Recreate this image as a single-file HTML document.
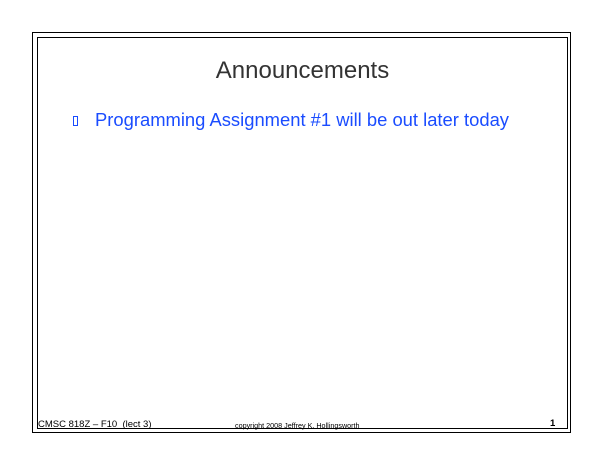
<!DOCTYPE html>
<html><head><style>
body{margin:0;width:605px;height:468px;background:#fff;position:relative;overflow:hidden;font-family:"Liberation Sans",sans-serif}
.o{position:absolute;left:32px;top:32px;width:539px;height:401px;border:1.5px solid #000;box-sizing:border-box}
.i{position:absolute;left:37px;top:37px;width:531px;height:392px;border:1.5px solid #000;box-sizing:border-box}
.t{position:absolute;left:0;width:605px;top:57px;text-align:center;font-size:24px;color:#333}
.b{position:absolute;left:73px;top:116px;width:5px;height:10px;border:1px solid #1a4cff;box-sizing:border-box}
.l{position:absolute;left:95px;top:109px;font-size:18.4px;color:#1a4cff;white-space:nowrap}
.f{position:absolute;top:419px;font-size:9.5px;color:#000;white-space:nowrap}
</style></head><body>
<div class="o"></div><div class="i"></div>
<div class="t">Announcements</div>
<div class="b"></div>
<div class="l">Programming Assignment #1 will be out later today</div>
<div class="f" style="left:38px">CMSC 818Z – F10 &nbsp;(lect 3)</div>
<div class="f" style="left:235px;font-size:7.2px;top:421px">copyright 2008 Jeffrey K. Hollingsworth</div>
<div class="f" style="left:550px;font-weight:bold;top:418px">1</div>
</body></html>
